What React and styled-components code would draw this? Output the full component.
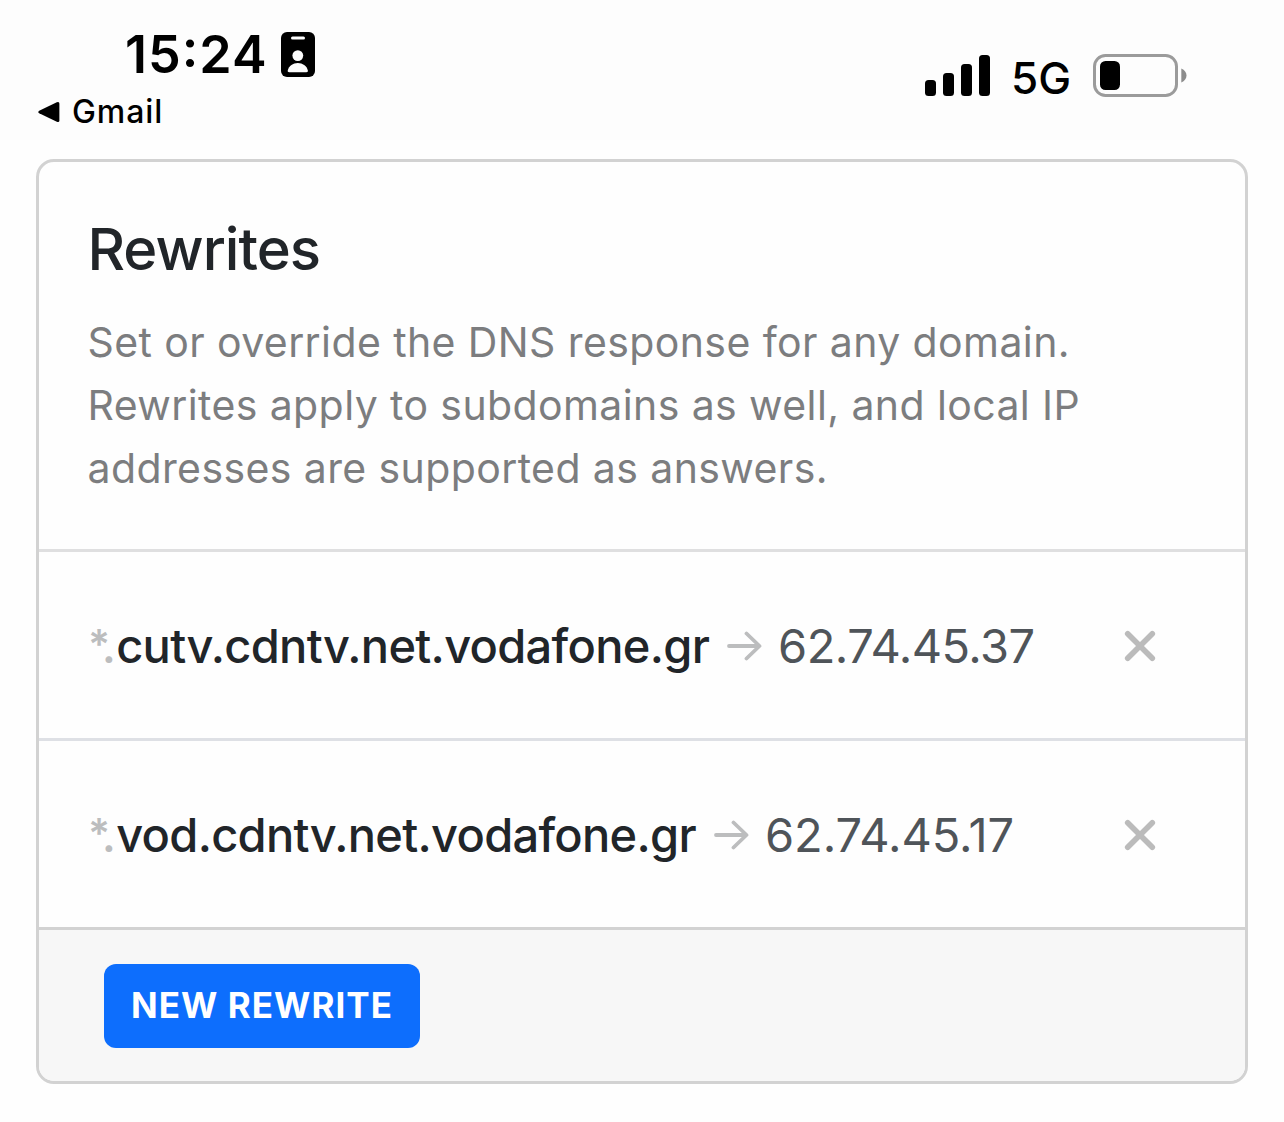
import React from "react";
import styled, { createGlobalStyle } from "styled-components";

const GlobalStyle = createGlobalStyle`
  * {
    box-sizing: border-box;
  }
  body {
    margin: 0;
    background-color: #fefefe;
    font-family: Inter, "Liberation Sans", sans-serif;
  }
`;

const Screen = styled.div`
  width: 1284px;
  height: 1122px;
  overflow: hidden;
`;

const StatusBar = styled.header`
  display: flex;
  justify-content: space-between;
  height: 140px;
  padding: 24px 97px 0 38px;
  background-color: #fdfdfd;
  color: #000;
`;

const StatusLeft = styled.div`
  display: flex;
  flex-direction: column;
  gap: 7px;
`;

const ClockRow = styled.div`
  display: flex;
  align-items: flex-start;
  padding-left: 87px;
`;

const Clock = styled.span`
  width: 156px;
  padding-top: 1px;
  font-size: 52px;
  font-weight: 600;
  line-height: 60px;
  letter-spacing: 1px;
`;

const Colon = styled.span`
  line-height: 0;
  vertical-align: 6px;
`;

const FocusIcon = styled.svg`
  width: 34px;
  height: 45px;
  margin-top: 8px;
`;

const BackLink = styled.div`
  display: flex;
  align-items: center;
  gap: 12px;
  font-size: 32px;
  font-weight: 500;
  line-height: 40px;
  letter-spacing: 0.9px;
`;

const StatusRight = styled.div`
  display: flex;
  align-items: flex-start;
  padding-top: 30px;
`;

const Signal = styled.div`
  display: flex;
  align-items: flex-end;
  gap: 7px;
  height: 41px;
  margin-top: 1px;
`;

const SignalBar = styled.span`
  width: 11px;
  height: ${(props) => props.$height}px;
  border-radius: 3.5px;
  background-color: #000;
`;

const Network = styled.span`
  width: 82px;
  margin: 2px 0 0 21px;
  font-size: 44px;
  font-weight: 450;
  line-height: 44px;
`;

const Battery = styled.svg`
  width: 94px;
  height: 43px;
`;

const Card = styled.section`
  width: 1212px;
  height: 925px;
  margin: 19px 0 0 36px;
  border: 3px solid #d2d2d2;
  border-radius: 18px;
  overflow: hidden;
`;

const CardHeader = styled.div`
  height: 390px;
  padding: 55px 48.5px 0;
  border-bottom: 3px solid #dfdfe0;
`;

const Title = styled.h1`
  margin: 0 0 30px;
  color: #212529;
  font-size: 58px;
  font-weight: 500;
  line-height: 64px;
  letter-spacing: -0.95px;
`;

const Description = styled.p`
  margin: 0;
  color: #7c7d7f;
  font-size: 41px;
  line-height: 63px;
  letter-spacing: 0.4px;
  white-space: nowrap;
`;

const RewriteRow = styled.div`
  display: flex;
  align-items: center;
  height: ${(props) => (props.$last ? 186 : 189)}px;
  padding: 1px 88px 0 49px;
  border-bottom: ${(props) => (props.$last ? "none" : "3px solid #dee0e5")};
  font-size: 47px;
  line-height: 60px;
  white-space: nowrap;
`;

const Wildcard = styled.span`
  width: 28.2px;
  color: #bcbdbe;
  font-weight: 500;
  letter-spacing: -2px;
`;

const Star = styled.span`
  font-size: 41px;
  font-weight: 600;
  line-height: 0;
  letter-spacing: -8.5px;
  vertical-align: 4px;
`;

const Domain = styled.span`
  color: #212529;
  font-weight: 500;
  letter-spacing: -0.7px;
`;

const Arrow = styled.svg`
  width: 36px;
  height: 30px;
  margin: 0 16px 0 17px;
`;

const Answer = styled.span`
  color: #4f5459;
  letter-spacing: ${(props) => props.$tracking}px;
`;

const RemoveButton = styled.button`
  display: flex;
  margin-left: auto;
  padding: 0;
  border: none;
  background: none;
  cursor: pointer;
`;

const CardFooter = styled.div`
  height: 154px;
  padding: 34px 65px;
  border-top: 3px solid #d2d2d2;
  background-color: #f7f7f7;
`;

const PrimaryButton = styled.button`
  width: 316px;
  height: 84px;
  padding: 0 0 2px 27px;
  border: none;
  border-radius: 12px;
  background-color: #0d6efd;
  color: #fff;
  font-family: inherit;
  font-size: 35px;
  font-weight: 650;
  line-height: 82px;
  letter-spacing: 1.05px;
  text-align: left;
  white-space: nowrap;
  cursor: pointer;
`;

const rewrites = [
  { domain: "cutv.cdntv.net.vodafone.gr", answer: "62.74.45.37", tracking: -0.54 },
  { domain: "vod.cdntv.net.vodafone.gr", answer: "62.74.45.17", tracking: -0.05 },
];

const App = () => (
  <Screen>
    <GlobalStyle />
    <StatusBar>
      <StatusLeft>
        <ClockRow>
          <Clock>
            15<Colon>:</Colon>24
          </Clock>
          <FocusIcon viewBox="0 0 34 45">
            <rect width="34" height="45" rx="6" fill="#000" />
            <rect x="10" y="4.6" width="14" height="3" rx="1.5" fill="#fdfdfd" />
            <circle cx="16.8" cy="23.6" r="5.4" fill="#fdfdfd" />
            <path d="M8.3 40.2C6.9 40.2 6.5 39.4 6.8 38.2C7.9 34 12 31 16.8 31S25.7 34 26.8 38.2C27.1 39.4 26.7 40.2 25.3 40.2Z" fill="#fdfdfd" />
          </FocusIcon>
        </ClockRow>
        <BackLink>
          <svg width="22" height="22" viewBox="0 0 22 22">
            <path d="M1.2 9.7L18.8 1.2Q21.4 0.2 21.4 2.8V19.2Q21.4 21.8 18.8 20.8L1.2 12.3Q-0.7 11 1.2 9.7Z" />
          </svg>
          Gmail
        </BackLink>
      </StatusLeft>
      <StatusRight>
        <Signal>
          <SignalBar $height={16} />
          <SignalBar $height={23} />
          <SignalBar $height={32} />
          <SignalBar $height={41} />
        </Signal>
        <Network>5G</Network>
        <Battery viewBox="0 0 94 43">
          <rect x="1.5" y="1.5" width="82" height="40" rx="11" fill="none" stroke="#9b9b9b" strokeWidth="3" />
          <rect x="7" y="7" width="20" height="29" rx="5.5" fill="#000" />
          <path d="M88.3 14.5C91.6 15.9 93.5 18.5 93.5 21.5S91.6 27.1 88.3 28.5Z" fill="#8c8c8c" />
        </Battery>
      </StatusRight>
    </StatusBar>

    <Card>
      <CardHeader>
        <Title>Rewrites</Title>
        <Description>
          Set or override the DNS response for any domain.
          <br />
          Rewrites apply to subdomains as well, and local IP
          <br />
          addresses are supported as answers.
        </Description>
      </CardHeader>
      {rewrites.map((item, index) => (
        <RewriteRow key={item.domain} $last={index === rewrites.length - 1}>
          <Wildcard>
            <Star>*</Star>.
          </Wildcard>
          <Domain>{item.domain}</Domain>
          <Arrow viewBox="0 0 36 30" fill="none" stroke="#bcbdbe" strokeWidth="3.8" strokeLinecap="round" strokeLinejoin="round">
            <path d="M3 15H33M20.5 2.5L33.5 15L20.5 27.5" />
          </Arrow>
          <Answer $tracking={item.tracking}>{item.answer}</Answer>
          <RemoveButton aria-label="Remove">
            <svg width="34" height="34" viewBox="0 0 34 34" stroke="#bbbbbb" strokeWidth="5.6" strokeLinecap="round">
              <path d="M4.7 4.7L29.3 29.3M29.3 4.7L4.7 29.3" />
            </svg>
          </RemoveButton>
        </RewriteRow>
      ))}
      <CardFooter>
        <PrimaryButton>NEW REWRITE</PrimaryButton>
      </CardFooter>
    </Card>
  </Screen>
);

export default App;
